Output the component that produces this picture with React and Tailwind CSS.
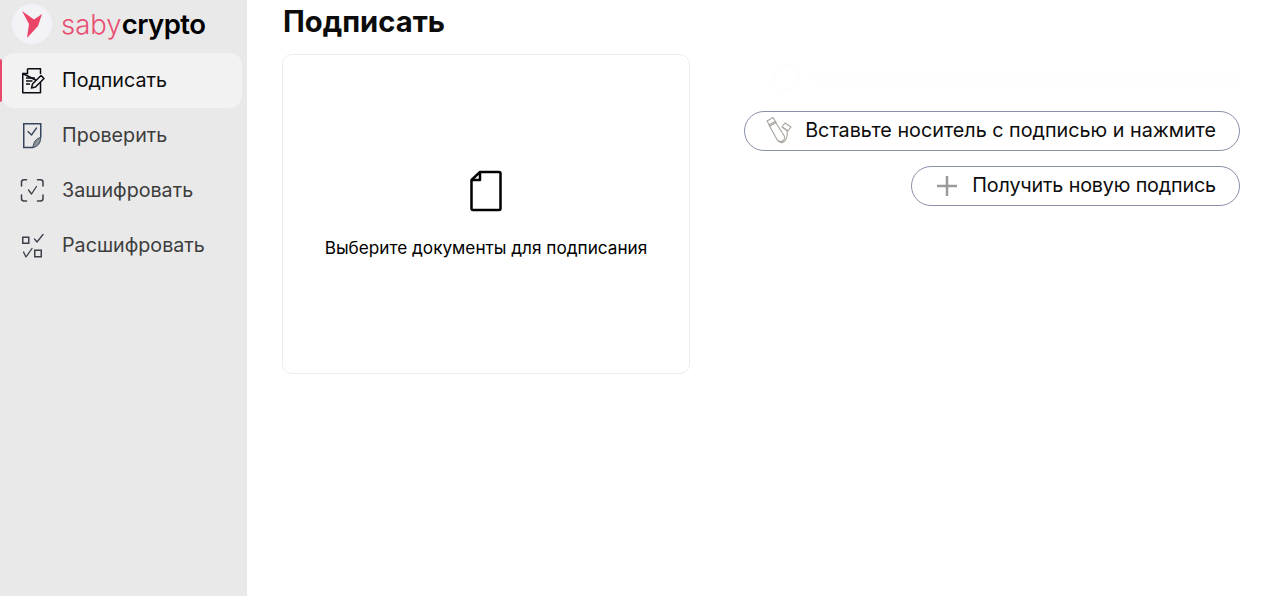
import React from 'react';

const navItems = [
  { label: 'Подписать', icon: 'sign', active: true },
  { label: 'Проверить', icon: 'check' },
  { label: 'Зашифровать', icon: 'encrypt' },
  { label: 'Расшифровать', icon: 'decrypt' },
];

function NavIcon({ name }) {
  if (name === 'sign') {
    return (
      <svg width="26" height="28" viewBox="0 0 26 28" fill="none" stroke="#0c0c14" strokeWidth="1.500">
        <path d="M8.500 1.750H21.500V7M21.500 15.500V25.750H3.750V6.500Z" strokeLinejoin="round" />
        <path d="M8.500 1.750V6.500H3.750" />
        <path d="M7 11H16M7 14H13.500M7 17H11" />
        <path d="M12.500 21L13.500 17L22 8.500L25 11.500L16.500 20Z" strokeLinejoin="round" fill="#f2f2f2" />
      </svg>
    );
  }
  if (name === 'check') {
    return (
      <svg width="26" height="28" viewBox="0 0 26 28" fill="none" stroke="#35465c" strokeWidth="1.500">
        <path d="M14 25.500H4.750V1.750H21.750V15.500" />
        <path d="M14 25.500C14.500 20 17 16.500 21.750 15.500C21.500 21 19 24.500 14 25.500Z" fill="#8f9296" strokeWidth="1" strokeLinejoin="round" />
        <path d="M9 9.500L12.500 13L17.500 6" strokeLinecap="round" strokeLinejoin="round" strokeWidth="1.300" />
      </svg>
    );
  }
  if (name === 'encrypt') {
    return (
      <svg width="26" height="28" viewBox="0 0 26 28" fill="none" stroke="#3b3f4a" strokeWidth="1.500">
        <path d="M7.500 2.750H5A2.500 2.500 0 0 0 2.500 5.250V9M18.500 2.750H21.500A2.500 2.500 0 0 1 24 5.250V9M2.500 18V21.500A2.500 2.500 0 0 0 5 24H7.500M24 18V21.500A2.500 2.500 0 0 1 21.500 24H18.500" strokeLinecap="round" />
        <path d="M9.500 13L12.500 17L17.500 9.500" strokeLinecap="round" strokeLinejoin="round" strokeWidth="1.300" />
      </svg>
    );
  }
  return (
    <svg width="26" height="28" viewBox="0 0 26 28" fill="none" stroke="#3b3f4a" strokeWidth="1.500">
      <rect x="3.750" y="5.250" width="6" height="6" />
      <rect x="15.750" y="18.250" width="6.500" height="6.500" />
      <path d="M15.500 7L18 10L24 2.500M4.500 20L7 25L13 16.500" strokeLinecap="round" strokeLinejoin="round" strokeWidth="1.300" />
    </svg>
  );
}

function NavRow({ item }) {
  return (
    <div className="relative h-[55px] flex items-center pl-[62px]">
      {item.active && (
        <>
          <div className="absolute left-[2px] right-[5px] top-0 bottom-0 rounded-[12px] bg-[#f2f2f2]" />
          <div className="absolute left-0 top-[6px] bottom-[6px] w-[2px] rounded-r bg-[#e8486a]" />
        </>
      )}
      <div className="absolute left-[19px] top-[14px]">
        <NavIcon name={item.icon} />
      </div>
      <span className={`relative pb-px text-[19.700px] leading-[30px] ${item.active ? 'text-[#0c0c0c]' : 'text-[#3d3d3d]'}`}>{item.label}</span>
    </div>
  );
}

function Logo() {
  return (
    <div className="h-[53px] flex items-start pl-3 pt-1">
      <div className="w-10 h-10 rounded-full bg-[#f2f2f7] flex items-center justify-center shrink-0">
        <svg width="26" height="34" viewBox="0 0 26 34">
          <path d="M3 4L15 12.500L23 7L19 19L8 31L10 17Z" fill="#ea4468" />
        </svg>
      </div>
      <div className="ml-[9px] text-[27.500px] leading-[41px]">
        <span className="text-[#ea4f72] font-light">saby</span>
        <span className="text-black font-semibold tracking-[-0.5px]">crypto</span>
      </div>
    </div>
  );
}

function PillButton({ icon, children, className }) {
  return (
    <button className={`h-10 rounded-full border border-[#8a90a8] flex items-center pr-[23px] pb-[2px] text-[19.750px] leading-[36px] text-[#0c0c0c] bg-white ${className}`}>
      {icon}
      {children}
    </button>
  );
}

export default function App() {
  return (
    <div className="h-[596px] flex bg-white overflow-hidden font-['Inter','Noto_Sans',sans-serif]">
      <aside className="w-[247px] shrink-0 bg-[#e9e9e9]">
        <Logo />
        <nav>
          {navItems.map((item) => (
            <NavRow key={item.label} item={item} />
          ))}
        </nav>
      </aside>

      <main className="flex-1 pl-[35px] pr-[36px]">
        <h1 className="h-[54px] pl-px text-[29.200px] leading-[44px] font-bold text-[#0c0c0c]">Подписать</h1>
        <div className="flex justify-between">
          <div className="w-[408px] h-[320px] rounded-[10px] border border-[#ececec] flex flex-col items-center pt-[115px]">
            <svg width="32" height="42" viewBox="0 0 32 42" fill="none" stroke="#000" strokeWidth="2.500" strokeLinejoin="round">
              <path d="M10 2H29A1.500 1.500 0 0 1 30.500 3.500V38.500A1.500 1.500 0 0 1 29 40H3A1.500 1.500 0 0 1 1.500 38.500V10Z" />
              <path d="M10 2V10H1.500" />
            </svg>
            <p className="mt-[24px] text-[17.200px] leading-6 text-black">Выберите документы для подписания</p>
          </div>

          <div className="flex flex-col items-end">
            {/* почти невидимая строка над кнопками */}
            <div className="mt-[11px] mb-[20px] h-[26px] w-[467px] flex items-center gap-[13px]">
              <div className="w-[26px] h-[26px] rounded-full border border-[#fefcf9]" />
              <div className="flex-1 h-[10px] bg-[#fefefe]" />
            </div>
            <PillButton
              className="pl-[19px] gap-[9px] mb-[15px]"
              icon={
                <svg width="32" height="32" viewBox="0 0 32 32" fill="none" stroke="#a8a29c" strokeWidth="1.100" strokeLinejoin="round">
                  <path d="M3 7L9 3.500L12 8.500L6 12Z" />
                  <path d="M5 11L11 7.500L20 21.500A4 4 0 0 1 13 25.500Z" />
                  <path d="M21 9L27 13L24 17L18 13Z" />
                  <path d="M19 13.500L23 16.500C24 21 22.500 27 18.500 28.500C16.500 29 14.500 27.500 13.500 26" />
                </svg>
              }
            >
              Вставьте носитель с подписью и нажмите
            </PillButton>
            <PillButton
              className="pl-[24px] gap-[14px] tracking-[-0.16px]"
              icon={
                <svg width="22" height="22" viewBox="0 0 22 22" stroke="#9a9a9a" strokeWidth="2.500" className="mt-[2px]">
                  <path d="M11 1V21M1 11H21" />
                </svg>
              }
            >
              Получить новую подпись
            </PillButton>
          </div>
        </div>
      </main>
    </div>
  );
}
